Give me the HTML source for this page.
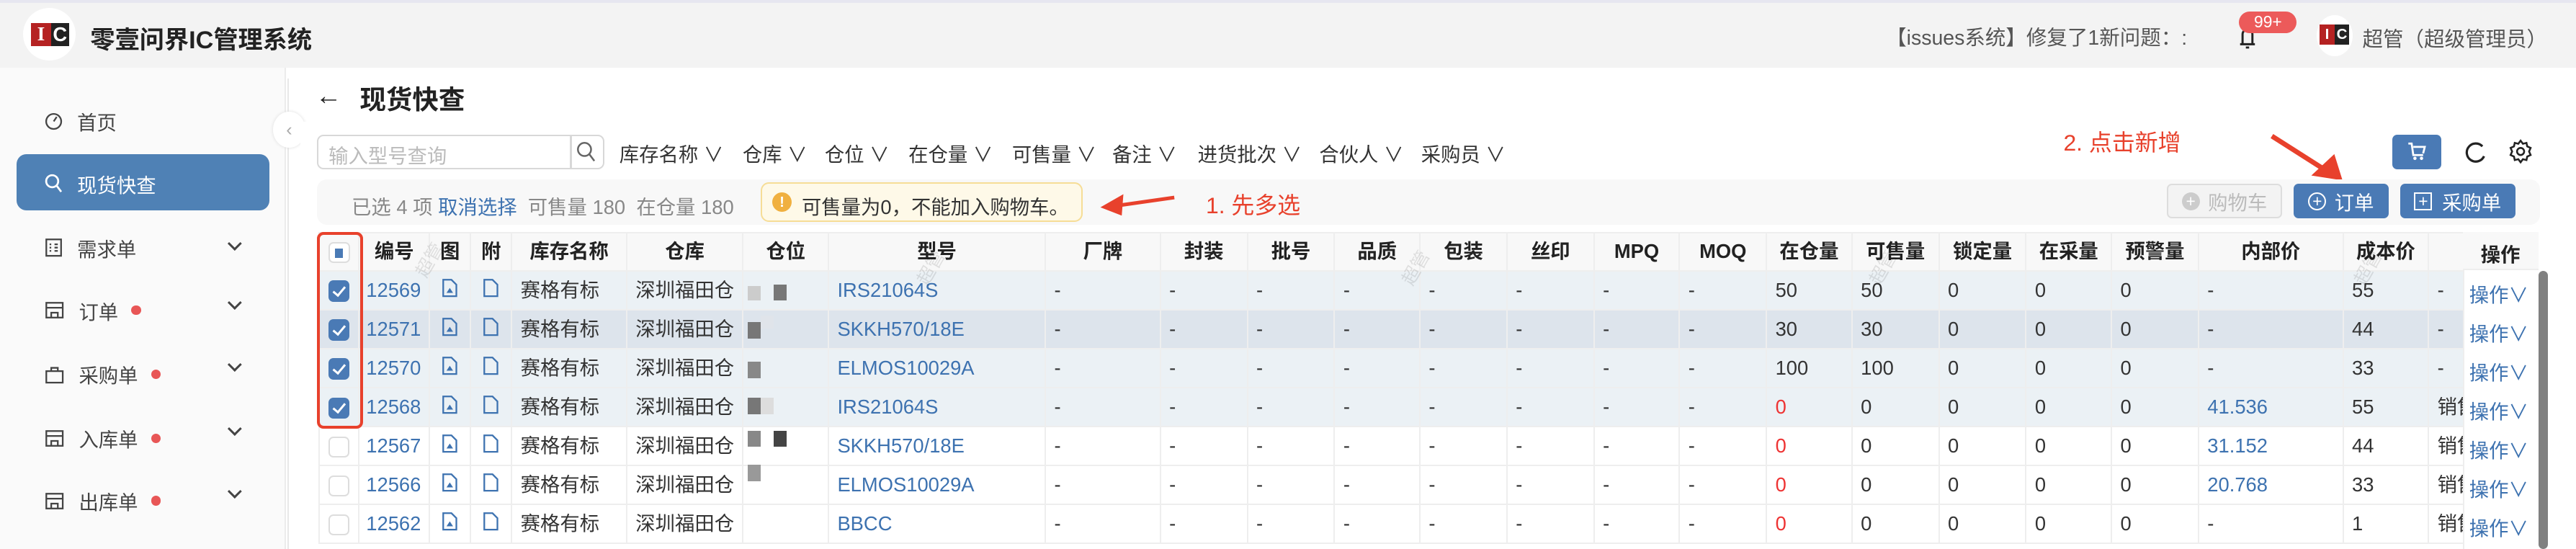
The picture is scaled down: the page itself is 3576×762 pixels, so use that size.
<!DOCTYPE html>
<html><head><meta charset="utf-8">
<style>
*{box-sizing:border-box;margin:0;padding:0}
html,body{width:3576px;height:762px;overflow:hidden;background:#fff}
#r{zoom:2.28061;width:1568px;height:334px;position:relative;overflow:hidden;font-family:"Liberation Sans","Noto Sans CJK SC",sans-serif;font-size:12px;color:#333;background:#fff}
.a{position:absolute;white-space:nowrap}
.hdr{left:0;top:0;width:1568px;height:41px;background:#f3f3f3;border-top:2px solid #e6e6f0}
.side{left:0;top:41px;width:174px;height:293px;background:#fafafa;border-right:1px solid #ececec}
.mi{position:absolute;left:27px;font-size:12px;color:#444;display:flex;align-items:center}
.mi svg{margin-right:9px}
.dot{display:inline-block;width:6px;height:6px;border-radius:50%;background:#e85656;margin-left:8px}
.chev{position:absolute;left:140px;width:6px;height:6px;border-right:1.4px solid #444;border-bottom:1.4px solid #444;transform:rotate(45deg)}
.flt{top:84px;font-size:12px;color:#333}
table{border-collapse:collapse;table-layout:fixed;position:absolute;left:194px;top:141px;font-size:12px}
td,th{height:23.7px;border:1px solid #eeeeee;padding:0 5px;overflow:hidden;white-space:nowrap;text-align:left;font-weight:normal;line-height:14px}
th{background:#f8f8f8;font-weight:bold;text-align:center;height:23.3px;color:#222}
tr.s td{background:#ebf1f5}
tr.h td{background:#dde4ec}
.b{color:#3d72b0}
.rd{color:#e33}
.cb{display:inline-block;width:13px;height:13px;border-radius:3px;vertical-align:middle;position:relative}
.ck{background:#4a7ab5}
.ck:after{content:"";position:absolute;left:4.5px;top:2px;width:3px;height:6px;border-right:1.5px solid #fff;border-bottom:1.5px solid #fff;transform:rotate(40deg)}
.un{border:1px solid #ddd;background:#fff}
.btn{border-radius:3px;font-size:12px;display:flex;align-items:center;justify-content:center}
</style></head><body><div id="r">

<div class="a hdr"></div>
<div class="a" style="left:14px;top:5px;width:32px;height:32px;border-radius:50%;background:#fff"></div>
<div class="a" style="left:19px;top:14px;width:12px;height:14px;background:#b52222;color:#fff;font-weight:bold;font-size:12px;line-height:14px;text-align:center;font-family:'Liberation Serif',serif">I</div>
<div class="a" style="left:31px;top:14px;width:11px;height:14px;background:#222;color:#fff;font-weight:bold;font-size:12px;line-height:14px;text-align:center">C</div>
<div class="a" style="left:55px;top:12px;font-size:15px;font-weight:bold;color:#222">零壹问界IC管理系统</div>

<div class="a" style="left:1148px;top:13px;font-size:12.5px;color:#555">【issues系统】修复了1新问题：:</div>
<svg class="a" style="left:1361px;top:15px" width="14" height="16" viewBox="0 0 14 16"><path d="M4 12V6a3 3 0 0 1 6 0v6M2.5 12h9M6 14h2" fill="none" stroke="#222" stroke-width="1.3"/></svg>
<div class="a" style="left:1363px;top:7px;width:35px;height:13px;border-radius:7px;background:#ec5a5a;color:#fff;font-size:10px;line-height:13px;text-align:center">99+</div>
<div class="a" style="left:1410px;top:9px;width:22px;height:25px;border-radius:50%;background:#fff"></div>
<div class="a" style="left:1412px;top:15px;width:9px;height:12px;background:#b52222;color:#fff;font-size:9px;font-weight:bold;line-height:12px;text-align:center">I</div>
<div class="a" style="left:1421px;top:15px;width:9px;height:12px;background:#222;color:#fff;font-size:9px;font-weight:bold;line-height:12px;text-align:center">C</div>
<div class="a" style="left:1438px;top:14px;font-size:12.5px;color:#555">超管（超级管理员）</div>

<div class="a side"></div>
<div class="mi" style="top:65px"><svg width="11" height="11" viewBox="0 0 12 12"><circle cx="6" cy="6" r="5" fill="none" stroke="#444" stroke-width="1.1"/><path d="M6 6l2-3" stroke="#444" stroke-width="1.1"/></svg>首页</div>
<div class="a" style="left:10px;top:94px;width:154px;height:34px;border-radius:6px;background:#4f81b5"></div>
<div class="mi" style="top:103px;color:#fff"><svg width="11" height="12" viewBox="0 0 12 13"><circle cx="5" cy="5" r="4" fill="none" stroke="#fff" stroke-width="1.3"/><path d="M8 8l3 4" stroke="#fff" stroke-width="1.3"/></svg>现货快查</div>
<div class="mi" style="top:142px"><svg width="11" height="12" viewBox="0 0 11 12"><rect x="1" y="1" width="9" height="10" fill="none" stroke="#444"/><path d="M3 4h1M3 6h1M3 8h1M6 4h2M6 6h2M6 8h2" stroke="#444"/></svg>需求单</div><div class="chev" style="top:145px"></div>
<div class="mi" style="top:180px"><svg width="12" height="11" viewBox="0 0 12 11"><rect x="1" y="1" width="10" height="9" fill="none" stroke="#444"/><path d="M1 4h10M4 10V7h4v3" fill="none" stroke="#444"/></svg>订单<span class="dot"></span></div><div class="chev" style="top:181px"></div>
<div class="mi" style="top:219px"><svg width="12" height="12" viewBox="0 0 12 12"><rect x="1" y="4" width="10" height="7" fill="none" stroke="#444"/><path d="M4 4V2h4v2" fill="none" stroke="#444"/></svg>采购单<span class="dot"></span></div><div class="chev" style="top:219px"></div>
<div class="mi" style="top:258px"><svg width="12" height="11" viewBox="0 0 12 11"><rect x="1" y="1" width="10" height="9" fill="none" stroke="#444"/><path d="M1 4h10M4 10V7h4v3" fill="none" stroke="#444"/></svg>入库单<span class="dot"></span></div><div class="chev" style="top:258px"></div>
<div class="mi" style="top:296px"><svg width="12" height="11" viewBox="0 0 12 11"><rect x="1" y="1" width="10" height="9" fill="none" stroke="#444"/><path d="M1 4h10M4 10V7h4v3" fill="none" stroke="#444"/></svg>出库单<span class="dot"></span></div><div class="chev" style="top:296px"></div>

<div class="a" style="left:175px;top:48px;width:1px;height:286px;background:#e8e8e8"></div>
<div class="a" style="left:166px;top:68px;width:20px;height:22px;border-radius:50%;background:#fff;box-shadow:0 0 2px #ddd;color:#aaa;font-size:11px;text-align:center;line-height:22px">‹</div>

<div class="a" style="left:192px;top:49px;font-size:16px;color:#222">←</div>
<div class="a" style="left:219px;top:48px;font-size:16px;font-weight:bold;color:#222">现货快查</div>

<div class="a" style="left:183px;top:74px;width:1380px;height:260px;background:#fff"></div>
<div class="a" style="left:193px;top:82px;width:175px;height:21px;border:1px solid #d8d8d8;border-radius:4px;background:#fff"></div>
<div class="a" style="left:347px;top:82px;width:1px;height:21px;background:#d8d8d8"></div>
<div class="a" style="left:200px;top:85px;color:#bbb">输入型号查询</div>
<svg class="a" style="left:351px;top:86px" width="12" height="13" viewBox="0 0 12 13"><circle cx="5" cy="5" r="4" fill="none" stroke="#666" stroke-width="1.1"/><path d="M8 8l3 4" stroke="#666" stroke-width="1.1"/></svg>
<div class="a flt" style="left:377px">库存名称 ∨</div>
<div class="a flt" style="left:452px">仓库 ∨</div>
<div class="a flt" style="left:502px">仓位 ∨</div>
<div class="a flt" style="left:553px">在仓量 ∨</div>
<div class="a flt" style="left:616px">可售量 ∨</div>
<div class="a flt" style="left:677px">备注 ∨</div>
<div class="a flt" style="left:729px">进货批次 ∨</div>
<div class="a flt" style="left:803px">合伙人 ∨</div>
<div class="a flt" style="left:865px">采购员 ∨</div>

<div class="a" style="left:1256px;top:76px;font-size:14px;color:#e8412c">2. 点击新增</div>
<svg class="a" style="left:1380px;top:80px" width="50" height="32" viewBox="0 0 50 32"><path d="M3 3L36 24" stroke="#e8412c" stroke-width="3"/><path d="M27 27L46 30L41 14Z" fill="#e8412c"/></svg>
<div class="a btn" style="left:1456px;top:82px;width:30px;height:21px;background:#4a7ab5"><svg width="12" height="12" viewBox="0 0 12 12"><path d="M1 1h2l1 7h6M4 3h7l-1 4" fill="none" stroke="#fff" stroke-width="1.2"/><circle cx="5" cy="10" r="1" fill="#fff"/><circle cx="9" cy="10" r="1" fill="#fff"/></svg></div>
<svg class="a" style="left:1500px;top:85px" width="14" height="15" viewBox="0 0 14 15"><path d="M11 4A5.5 5.5 0 1 0 12 10" fill="none" stroke="#222" stroke-width="1.4"/></svg>
<svg class="a" style="left:1527px;top:84px" width="15" height="16" viewBox="0 0 16 16"><path d="M8 1l1.5 2 2.3-.6.5 2.3 2.2 1-1 2.3 1 2.3-2.2 1-.5 2.3-2.3-.6L8 15l-1.5-2-2.3.6-.5-2.3-2.2-1 1-2.3-1-2.3 2.2-1 .5-2.3 2.3.6z" fill="none" stroke="#222" stroke-width="1.2"/><circle cx="8" cy="8" r="2.3" fill="none" stroke="#222" stroke-width="1.2"/></svg>

<div class="a" style="left:193px;top:109px;width:1353px;height:28px;background:#f8f8f8;border-radius:6px"></div>
<div class="a" style="left:214px;top:116px;color:#888">已选 4 项 <span class="b">取消选择</span> &nbsp;可售量 180 &nbsp;在仓量 180</div>
<div class="a" style="left:463px;top:111px;width:196px;height:24px;border:1px solid #f6dd96;border-radius:5px;background:#fef9e8"></div>
<div class="a" style="left:470px;top:117px;width:12px;height:12px;border-radius:50%;background:#f0b040;color:#fff;font-size:9px;text-align:center;line-height:12px;font-weight:bold">!</div>
<div class="a" style="left:488px;top:116px;color:#333">可售量为0，不能加入购物车。</div>
<svg class="a" style="left:668px;top:116px" width="50" height="16" viewBox="0 0 50 16"><path d="M47 4L12 9" stroke="#e8412c" stroke-width="2.2"/><path d="M2 10L16 2L15 15Z" fill="#e8412c"/></svg>
<div class="a" style="left:734px;top:114px;font-size:14px;color:#e8412c">1. 先多选</div>

<div class="a btn" style="left:1319px;top:112px;width:70px;height:21px;border:1px solid #ddd;background:#f3f3f3;color:#bbb"><span style="display:inline-block;width:11px;height:11px;border-radius:50%;background:#ccc;color:#fff;font-size:10px;line-height:11px;text-align:center;margin-right:5px">+</span>购物车</div>
<div class="a btn" style="left:1396px;top:112px;width:58px;height:21px;background:#4a7ab5;color:#fff"><span style="display:inline-block;width:11px;height:11px;border-radius:50%;border:1px solid #fff;font-size:10px;line-height:9px;text-align:center;margin-right:5px">+</span>订单</div>
<div class="a btn" style="left:1461px;top:112px;width:70px;height:21px;background:#4a7ab5;color:#fff"><span style="display:inline-block;width:11px;height:11px;border:1px solid #fff;font-size:10px;line-height:9px;text-align:center;margin-right:6px">+</span>采购单</div>

<table>
<colgroup><col style="width:24px"><col style="width:43px"><col style="width:25px"><col style="width:25px"><col style="width:70px"><col style="width:70px"><col style="width:52px"><col style="width:132px"><col style="width:70px"><col style="width:53px"><col style="width:53px"><col style="width:52px"><col style="width:53px"><col style="width:53px"><col style="width:52px"><col style="width:53px"><col style="width:52px"><col style="width:53px"><col style="width:53px"><col style="width:52px"><col style="width:53px"><col style="width:88px"><col style="width:52px"><col style="width:30px"></colgroup>
<tr><th style="padding:0 4px"><span class="cb un" style="border-color:#ddd"><span style="position:absolute;left:3px;top:3px;width:5px;height:6px;background:#4a7ab5"></span></span></th><th>编号</th><th>图</th><th>附</th><th>库存名称</th><th>仓库</th><th>仓位</th><th>型号</th><th>厂牌</th><th>封装</th><th>批号</th><th>品质</th><th>包装</th><th>丝印</th><th>MPQ</th><th>MOQ</th><th>在仓量</th><th>可售量</th><th>锁定量</th><th>在采量</th><th>预警量</th><th>内部价</th><th>成本价</th><th></th></tr>
<tbody id="tb"></tbody>
</table>

<div class="a" style="left:1499px;top:141px;width:46px;height:193px;background:#fff;border-left:1px solid #eee"></div>
<div class="a" style="left:1499px;top:141px;width:46px;height:23.5px;background:#f8f8f8;border-bottom:1px solid #eee"></div>
<div class="a" style="left:1510px;top:145px;font-weight:bold;color:#222">操作</div>
<div id="ops"></div>
<div class="a" style="left:1545px;top:165px;width:6px;height:169px;border-radius:3px;background:#808080"></div>

<div class="a" style="left:193px;top:141px;width:28px;height:120px;border:2px solid #e8412c;border-radius:4px"></div>

<div class="a" style="left:455px;top:168px;width:24px;height:158px">
<div style="position:absolute;left:0;top:6px;width:8px;height:9px;background:#ccc"></div><div style="position:absolute;left:16px;top:5px;width:8px;height:10px;background:#777"></div>
<div style="position:absolute;left:0;top:28px;width:8px;height:10px;background:#777"></div><div style="position:absolute;left:8px;top:24px;width:8px;height:8px;background:#e0e4ea"></div>
<div style="position:absolute;left:0;top:52px;width:8px;height:10px;background:#888"></div>
<div style="position:absolute;left:0;top:74px;width:8px;height:10px;background:#777"></div><div style="position:absolute;left:8px;top:74px;width:8px;height:10px;background:#ddd"></div>
<div style="position:absolute;left:0;top:94px;width:8px;height:10px;background:#888"></div><div style="position:absolute;left:16px;top:94px;width:8px;height:10px;background:#444"></div>
<div style="position:absolute;left:0;top:115px;width:8px;height:10px;background:#999"></div>
</div>
<div class="a" style="left:250px;top:150px;transform:rotate(-60deg);color:rgba(0,0,0,.1);font-size:11px">超管</div>
<div class="a" style="left:555px;top:155px;transform:rotate(-60deg);color:rgba(0,0,0,.1);font-size:11px">超管</div>
<div class="a" style="left:850px;top:155px;transform:rotate(-60deg);color:rgba(0,0,0,.1);font-size:11px">超管</div>
<div class="a" style="left:1135px;top:155px;transform:rotate(-60deg);color:rgba(0,0,0,.1);font-size:11px">超管</div>
<div class="a" style="left:1430px;top:155px;transform:rotate(-60deg);color:rgba(0,0,0,.1);font-size:11px">超管</div>

<script>
var rows=[["12569","IRS21064S","50","50","-","55","-","s"],["12571","SKKH570/18E","30","30","-","44","-","h"],["12570","ELMOS10029A","100","100","-","33","-","s"],["12568","IRS21064S","0","0","41.536","55","销售","s"],["12567","SKKH570/18E","0","0","31.152","44","销售",""],["12566","ELMOS10029A","0","0","20.768","33","销售",""],["12562","BBCC","0","0","-","1","销售",""]];
var img='<svg width="10" height="12" viewBox="0 0 10 12"><path d="M1 1h5l3 3v7H1z" fill="none" stroke="#3d72b0"/><path d="M3 9l2-3 2 3z" fill="#3d72b0"/></svg>';
var fil='<svg width="10" height="12" viewBox="0 0 10 12"><path d="M1 1h5l3 3v7H1z" fill="none" stroke="#3d72b0"/></svg>';
var h="",o="";
rows.forEach(function(r,i){
 var sel=i<4;
 h+='<tr class="'+r[7]+'"><td style="padding:0 5px">'+(sel?'<span class="cb ck"></span>':'<span class="cb un"></span>')+'</td><td class="b" style="padding:0 4px">'+r[0]+'</td><td style="text-align:center;padding:0">'+img+'</td><td style="text-align:center;padding:0">'+fil+'</td><td>赛格有标</td><td>深圳福田仓</td><td></td><td class="b">'+r[1]+'</td>';
 for(var k=0;k<8;k++)h+='<td>-</td>';
 var z=(r[2]=="0"&&i>2)?'<span class="rd">0</span>':r[2];
 h+='<td>'+z+'</td><td>'+r[3]+'</td><td>0</td><td>0</td><td>0</td><td'+(r[4]!="-"?' class="b"':'')+'>'+r[4]+'</td><td>'+r[5]+'</td><td>'+r[6]+'</td></tr>';
 o+='<div class="a b" style="left:1503px;top:'+(169.5+i*23.7)+'px">操作∨</div>';
});
document.getElementById("tb").innerHTML=h;
document.getElementById("ops").innerHTML=o;
</script>
</div></body></html>
